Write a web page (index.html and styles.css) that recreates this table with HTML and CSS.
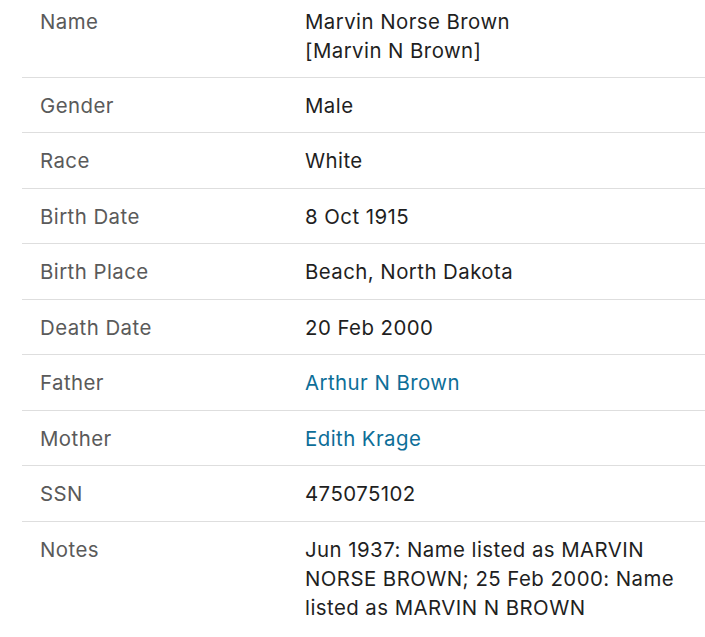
FILE: index.html
```html
<!DOCTYPE html>
<html lang="en">
<head>
<meta charset="utf-8">
<title>Record</title>
<link rel="stylesheet" href="styles.css">
</head>
<body>
<table class="facts">
  <tbody>
    <tr class="first"><th>Name</th><td>Marvin Norse Brown<br>[Marvin N Brown]</td></tr>
    <tr><th>Gender</th><td>Male</td></tr>
    <tr><th>Race</th><td>White</td></tr>
    <tr><th>Birth Date</th><td>8 Oct 1915</td></tr>
    <tr><th>Birth Place</th><td>Beach, North Dakota</td></tr>
    <tr><th>Death Date</th><td>20 Feb 2000</td></tr>
    <tr><th>Father</th><td><a class="link" href="#">Arthur N Brown</a></td></tr>
    <tr><th>Mother</th><td><a class="link" href="#">Edith Krage</a></td></tr>
    <tr><th>SSN</th><td>475075102</td></tr>
    <tr><th>Notes</th><td class="notes">Jun 1937: Name listed as MARVIN NORSE BROWN; 25 Feb 2000: Name listed as MARVIN N BROWN</td></tr>
  </tbody>
</table>
</body>
</html>
```

FILE: styles.css
```css
html, body {
  margin: 0;
  padding: 0;
  background: #ffffff;
}
body {
  font-family: Inter, "Noto Sans", sans-serif;
  font-size: 20.4px;
  line-height: 29px;
  letter-spacing: 0.45px;
  color: #1f1f1f;
}
.facts {
  border-collapse: collapse;
  margin: -7px 0 0 22px;
  width: 683px;
}
.facts th,
.facts td {
  padding: 13px 0 12.5px 0;
  vertical-align: top;
  text-align: left;
  border-top: 1px solid #dedede;
}
.facts tr.first th,
.facts tr.first td {
  border-top: none;
  padding-top: 14px;
  padding-bottom: 11.5px;
}
.facts th {
  width: 265px;
  padding-left: 18px;
  font-weight: normal;
  color: #5a5a5a;
}
.facts td {
  color: #1f1f1f;
}
.notes {
  padding-right: 12px;
}
.link {
  color: #0d6e98;
  text-decoration: none;
}
```
